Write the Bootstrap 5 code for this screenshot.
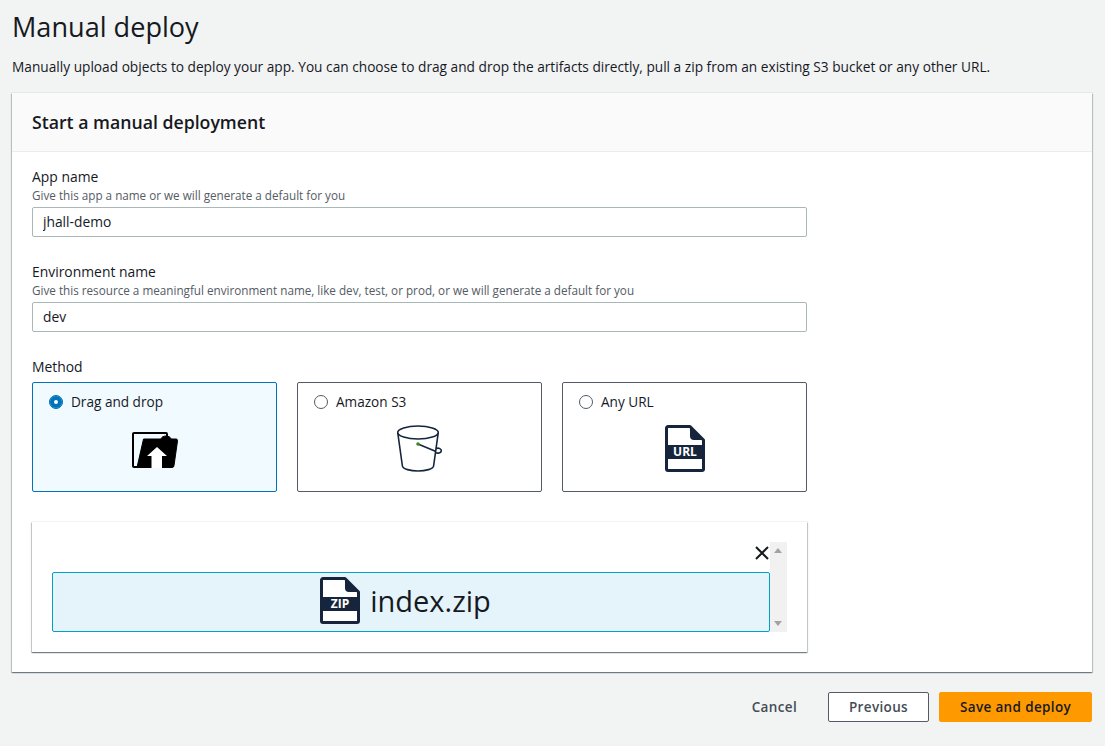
<!DOCTYPE html>
<html lang="en">
<head>
    <title>Manual deploy</title>
    <meta charset="UTF-8">
    <meta name="viewport" content="width=device-width, initial-scale=1.0">
    <link href="https://cdn.jsdelivr.net/npm/bootstrap@5.3.0/dist/css/bootstrap.min.css" rel="stylesheet">
    <style>
        body { background: #f2f3f3; color: #16191f; font-family: "Open Sans", "Noto Sans", sans-serif; font-size: 13.6px; line-height: 20px; }
        .page-wrap { padding: 0 13px 0 12px; }
        .page-title { font-size: 27.1px; font-weight: 400; line-height: 34px; padding-top: 10px; margin: 0; }
        .page-desc { margin: 13px 0 16px; color: #16191f; font-size: 13.7px; }
        .deploy-card { border: 0; border-radius: 0; box-shadow: 0 1px 1px 0 rgba(0,28,36,.35), 1px 1px 1px 0 rgba(0,28,36,.15), -1px 1px 1px 0 rgba(0,28,36,.15), 0 0 0 1px rgba(0,28,36,.05); }
        .deploy-card .card-header { background: #fafafa; border-bottom: 1px solid #eaeded; border-radius: 0; height: 59px; padding: 18px 20px 0; font-size: 17.7px; font-weight: 600; line-height: 22px; }
        .deploy-card .card-body { padding: 15px 20px 20px; width: 815px; flex: none; }
        .field-label { line-height: 20px; font-size: 13.9px; }
        .field-hint { font-size: 11.7px; line-height: 14px; color: #545b64; margin-top: 1px; margin-bottom: 5px; }
        .field-input { height: 30px; border: 1px solid #aab7b8; border-radius: 2px; padding: 3px 10px 5px; font-size: 13.8px; color: #16191f; }
        .field-block { margin-bottom: 25px; }
        .method-tiles { gap: 20px; margin-top: 5px; margin-bottom: 30px; }
        .method-tile { flex: 0 0 245px; height: 110px; border: 1px solid #545b64; border-radius: 2px; padding: 9px 16px 0; background: #fff; }
        .method-tile.is-active { border-color: #0073bb; background: #f1faff; }
        .tile-radio { display: flex; align-items: center; gap: 8px; min-height: 20px; margin: 0; padding: 0; }
        .tile-radio .form-check-input { width: 14px; height: 14px; margin: 0; float: none; border: 1px solid #545b64; flex: none; }
        .tile-radio .form-check-input:checked { background-color: #0073bb; border-color: #0073bb; background-image: none; box-shadow: inset 0 0 0 4px #0073bb, inset 0 0 0 7px #fff; }
        .tile-icon { display: flex; justify-content: center; margin-top: 13px; }
        .tile-icon-drop { margin-top: 20px; }
        .tile-icon-bucket { margin-top: 13px; padding-left: 1px; }
        .drop-box { height: 130px; padding: 20px; background: #fff; box-shadow: 0 1px 1px 0 rgba(0,28,36,.35), 1px 1px 1px 0 rgba(0,28,36,.15), -1px 1px 1px 0 rgba(0,28,36,.15), 0 0 0 1px rgba(0,28,36,.05); }
        .drop-close { height: 30px; padding-top: 3px; padding-right: 0; line-height: 0; }
        .file-tile { height: 60px; width: 718px; background: #e5f4fa; border: 1px solid #00a1c9; border-radius: 2px; gap: 10px; padding: 0 11px 3px 0; font-size: 29px; line-height: 1; }
        .fake-scroll { width: 17px; height: 90px; background: #f1f1f1; padding: 6px 4px; }
        .arrow-up { width: 0; height: 0; border: 4px solid transparent; border-top: 0; border-bottom: 5px solid #a3a3a3; }
        .arrow-down { width: 0; height: 0; border: 4px solid transparent; border-bottom: 0; border-top: 5px solid #a3a3a3; }
        .footer-actions { margin-top: 20px; gap: 10px; }
        .act-btn { height: 30px; padding: 0 20px; font-size: 13.5px; font-weight: 600; letter-spacing: .35px; border-radius: 2px; line-height: 28px; }
        .act-link { color: #444c56; border: 1px solid transparent; padding: 0 20px; }
        .act-prev { color: #444c56; border: 1px solid #545b64; background: #fff; width: 101px; padding: 0; }
        .act-save { color: #16191f; border: 1px solid #ff9900; background: #ff9900; width: 153px; padding: 0; }
    </style>
</head>
<body>
    <div class="page-wrap">
        <h1 class="page-title">Manual deploy</h1>
        <p class="page-desc">Manually upload objects to deploy your app. You can choose to drag and drop the artifacts directly, pull a zip from an existing S3 bucket or any other URL.</p>

        <div class="card deploy-card">
            <div class="card-header">Start a manual deployment</div>
            <div class="card-body">
                <div class="field-block">
                    <label for="appName" class="field-label d-block">App name</label>
                    <div class="field-hint">Give this app a name or we will generate a default for you</div>
                    <input type="text" id="appName" class="form-control field-input" value="jhall-demo">
                </div>
                <div class="field-block">
                    <label for="envName" class="field-label d-block">Environment name</label>
                    <div class="field-hint">Give this resource a meaningful environment name, like dev, test, or prod, or we will generate a default for you</div>
                    <input type="text" id="envName" class="form-control field-input" value="dev">
                </div>
                <div class="field-label">Method</div>
                <div class="d-flex method-tiles">
                    <div class="method-tile is-active">
                        <div class="form-check tile-radio">
                            <input class="form-check-input" type="radio" name="method" id="m1" checked>
                            <label class="form-check-label" for="m1">Drag and drop</label>
                        </div>
                        <div class="tile-icon tile-icon-drop">
                            <svg width="46" height="36" viewBox="0 0 46 36">
                                <path d="M2 1h32a1 1 0 0 1 1 1v32a1 1 0 0 1-1 1H2a1 1 0 0 1-1-1V2a1 1 0 0 1 1-1z" fill="none" stroke="#000" stroke-width="2"/>
                                <path d="M11.500 7H29c.5-2 2.500-3 5-3s4.500 1 5 3h5a1.500 1.500 0 0 1 1.500 2L42 33.500a2 2 0 0 1-2 2H5z" fill="#000" stroke="#000" stroke-linejoin="round"/>
                                <path d="M15 24l10-9 10 9h-5v12H19.500V24z" fill="#fff"/>
                            </svg>
                        </div>
                    </div>
                    <div class="method-tile">
                        <div class="form-check tile-radio">
                            <input class="form-check-input" type="radio" name="method" id="m2">
                            <label class="form-check-label" for="m2">Amazon S3</label>
                        </div>
                        <div class="tile-icon tile-icon-bucket">
                            <svg width="46" height="48" viewBox="0 0 46 48">
                                <g fill="none" stroke="#16253b" stroke-width="1.600">
                                    <ellipse cx="21" cy="7.500" rx="20.300" ry="6.500"/>
                                    <path d="M.8 8l4.600 33c.4 3 8 5 15.600 5s15.200-2 15.600-5l4.600-33"/>
                                    <path d="M21 19l18 7.500"/>
                                    <path d="M38.800 23.500c3-1 6 .5 5.500 2.500s-3.500 2.800-6 1.500"/>
                                </g>
                                <circle cx="21" cy="19" r="1.800" fill="#3f8624"/>
                            </svg>
                        </div>
                    </div>
                    <div class="method-tile">
                        <div class="form-check tile-radio">
                            <input class="form-check-input" type="radio" name="method" id="m3">
                            <label class="form-check-label" for="m3">Any URL</label>
                        </div>
                        <div class="tile-icon">
                            <svg width="40" height="47" viewBox="0 0 40 47">
                                <path d="M3 1.500h22L38.500 15v29a1.500 1.500 0 0 1-1.500 1.500H3A1.500 1.500 0 0 1 1.500 44V3A1.500 1.500 0 0 1 3 1.500z" fill="#fff" stroke="#16253b" stroke-width="3" stroke-linejoin="round"/>
                                <path d="M25 1.500V11a4 4 0 0 0 4 4h9.500z" fill="#16253b"/>
                                <rect x="1.500" y="20" width="37" height="14" fill="#16253b"/>
                                <text x="20" y="31" text-anchor="middle" font-family="Open Sans, sans-serif" font-size="12" font-weight="700" fill="#fff">URL</text>
                            </svg>
                        </div>
                    </div>
                </div>
                <div class="drop-box d-flex">
                    <div>
                        <div class="drop-close text-end">
                            <svg width="16" height="16" viewBox="0 0 16 16"><path d="M2 2l12 12M14 2L2 14" stroke="#16191f" stroke-width="2" fill="none"/></svg>
                        </div>
                        <div class="file-tile d-flex align-items-center justify-content-center">
                            <svg width="40" height="47" viewBox="0 0 40 47">
                                <path d="M3 1.500h22L38.500 15v29a1.500 1.500 0 0 1-1.500 1.500H3A1.500 1.500 0 0 1 1.500 44V3A1.500 1.500 0 0 1 3 1.500z" fill="#fff" stroke="#16253b" stroke-width="3" stroke-linejoin="round"/>
                                <path d="M25 1.500V11a4 4 0 0 0 4 4h9.500z" fill="#16253b"/>
                                <rect x="1.500" y="20" width="37" height="14" fill="#16253b"/>
                                <text x="20" y="31" text-anchor="middle" font-family="Open Sans, sans-serif" font-size="12" font-weight="700" fill="#fff">ZIP</text>
                            </svg>
                            <span>index.zip</span>
                        </div>
                    </div>
                    <div class="fake-scroll d-flex flex-column justify-content-between">
                        <div class="arrow-up"></div>
                        <div class="arrow-down"></div>
                    </div>
                </div>
            </div>
        </div>

        <div class="d-flex justify-content-end align-items-center footer-actions">
            <button type="button" class="btn act-btn act-link">Cancel</button>
            <button type="button" class="btn act-btn act-prev">Previous</button>
            <button type="button" class="btn act-btn act-save">Save and deploy</button>
        </div>
    </div>
    <script src="https://cdn.jsdelivr.net/npm/bootstrap@5.3.0/dist/js/bootstrap.bundle.min.js"></script>
</body>
</html>
